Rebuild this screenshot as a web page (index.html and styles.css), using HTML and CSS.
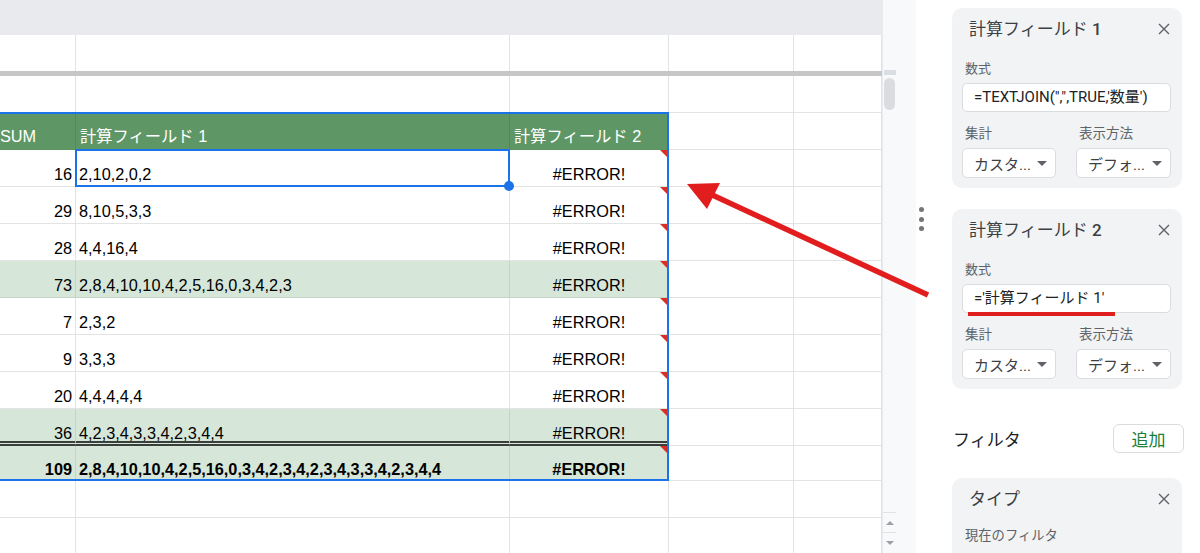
FILE: index.html
```html
<!DOCTYPE html>
<html lang="ja">
<head>
<meta charset="utf-8">
<title>Pivot</title>
<link rel="stylesheet" href="styles.css">
</head>
<body>
<div class="app">
  <div class="sheet">
    <div class="band"></div>
    <div class="row r-top"><div class="c a"></div><div class="c b"></div><div class="c cc"></div><div class="c d"></div><div class="c e"></div></div>
    <div class="freeze"></div>
    <div class="row"><div class="c a"></div><div class="c b"></div><div class="c cc"></div><div class="c d"></div><div class="c e"></div></div>
    <div class="row hdr"><div class="c a">SUM</div><div class="c b">計算フィールド 1</div><div class="c cc">計算フィールド 2</div><div class="c d"></div><div class="c e"></div></div>
    <div class="row"><div class="c a">16</div><div class="c b">2,10,2,0,2</div><div class="c cc err">#ERROR!</div><div class="c d"></div><div class="c e"></div></div>
    <div class="row"><div class="c a">29</div><div class="c b">8,10,5,3,3</div><div class="c cc err">#ERROR!</div><div class="c d"></div><div class="c e"></div></div>
    <div class="row"><div class="c a">28</div><div class="c b">4,4,16,4</div><div class="c cc err">#ERROR!</div><div class="c d"></div><div class="c e"></div></div>
    <div class="row g"><div class="c a">73</div><div class="c b">2,8,4,10,10,4,2,5,16,0,3,4,2,3</div><div class="c cc err">#ERROR!</div><div class="c d"></div><div class="c e"></div></div>
    <div class="row"><div class="c a">7</div><div class="c b">2,3,2</div><div class="c cc err">#ERROR!</div><div class="c d"></div><div class="c e"></div></div>
    <div class="row"><div class="c a">9</div><div class="c b">3,3,3</div><div class="c cc err">#ERROR!</div><div class="c d"></div><div class="c e"></div></div>
    <div class="row"><div class="c a">20</div><div class="c b">4,4,4,4,4</div><div class="c cc err">#ERROR!</div><div class="c d"></div><div class="c e"></div></div>
    <div class="row g dbl"><div class="c a">36</div><div class="c b">4,2,3,4,3,3,4,2,3,4,4</div><div class="c cc err">#ERROR!</div><div class="c d"></div><div class="c e"></div></div>
    <div class="row g total"><div class="c a">109</div><div class="c b">2,8,4,10,10,4,2,5,16,0,3,4,2,3,4,2,3,4,3,3,4,2,3,4,4</div><div class="c cc err">#ERROR!</div><div class="c d"></div><div class="c e"></div></div>
    <div class="row"><div class="c a"></div><div class="c b"></div><div class="c cc"></div><div class="c d"></div><div class="c e"></div></div>
    <div class="row"><div class="c a"></div><div class="c b"></div><div class="c cc"></div><div class="c d"></div><div class="c e"></div></div>
    <div class="table-outline"></div>
    <div class="sel"><span class="handle"></span></div>
  </div>

  <div class="vscroll">
    <div class="vs-freeze"></div>
    <div class="vs-thumb"></div>
    <div class="vs-space"></div>
    <div class="vs-arrows">
      <div class="vs-btn"><span class="tri-up"></span></div>
      <div class="vs-btn"><span class="tri-down"></span></div>
    </div>
  </div>
  <div class="gutter"></div>

  <div class="panel">
    <div class="drag-col">
      <div class="dots"><span></span><span></span><span></span></div>
    </div>
    <div class="cards">
      <div class="card">
        <div class="card-head">
          <span class="card-title">計算フィールド <b>1</b></span>
          <svg class="close" width="12" height="12" viewBox="0 0 12 12"><path d="M1 1L11 11M11 1L1 11" stroke="#5f6368" stroke-width="1.4" fill="none"/></svg>
        </div>
        <div class="lbl">数式</div>
        <div class="field">=TEXTJOIN(",",TRUE,'数量')</div>
        <div class="lbl-row"><span>集計</span><span>表示方法</span></div>
        <div class="dd-row">
          <div class="dd"><span>カスタ...</span><span class="caret"></span></div>
          <div class="dd"><span>デフォ...</span><span class="caret"></span></div>
        </div>
      </div>

      <div class="card card2">
        <div class="card-head">
          <span class="card-title">計算フィールド <b>2</b></span>
          <svg class="close" width="12" height="12" viewBox="0 0 12 12"><path d="M1 1L11 11M11 1L1 11" stroke="#5f6368" stroke-width="1.4" fill="none"/></svg>
        </div>
        <div class="lbl">数式</div>
        <div class="field">='計算フィールド 1'<span class="underline"></span></div>
        <div class="lbl-row"><span>集計</span><span>表示方法</span></div>
        <div class="dd-row">
          <div class="dd"><span>カスタ...</span><span class="caret"></span></div>
          <div class="dd"><span>デフォ...</span><span class="caret"></span></div>
        </div>
      </div>

      <div class="filter-row">
        <span class="filter-title">フィルタ</span>
        <span class="add-btn">追加</span>
      </div>

      <div class="card card3">
        <div class="card-head">
          <span class="card-title">タイプ</span>
          <svg class="close" width="12" height="12" viewBox="0 0 12 12"><path d="M1 1L11 11M11 1L1 11" stroke="#5f6368" stroke-width="1.4" fill="none"/></svg>
        </div>
        <div class="lbl lbl3">現在のフィルタ</div>
        <div class="field field3"></div>
      </div>
    </div>
  </div>

  <svg class="arrow" width="1200" height="553" viewBox="0 0 1200 553">
    <line x1="928" y1="295" x2="708" y2="193" stroke="#e21d1d" stroke-width="5.5" stroke-linecap="butt"/>
    <polygon points="687,184 720,183 707,209" fill="#e21d1d"/>
  </svg>
</div>
</body>
</html>
```

FILE: styles.css
```css
html, body {
  margin: 0;
  padding: 0;
}
body {
  width: 1200px;
  height: 553px;
  overflow: hidden;
  background: #fff;
  font-family: "Liberation Sans", "Noto Sans CJK JP", sans-serif;
}
.app {
  position: relative;
  display: flex;
  width: 1200px;
  height: 553px;
  overflow: hidden;
}

/* ---------- sheet ---------- */
.sheet {
  position: relative;
  width: 882px;
  flex: none;
  overflow: hidden;
  font-size: 16.3px;
  color: #000;
}
.band {
  height: 35px;
  background: #e8eaed;
}
.row {
  display: flex;
  height: 37px;
}
.r-top { height: 36px; }
.freeze {
  height: 5px;
  background: #c6c6c6;
}
.c {
  box-sizing: border-box;
  height: 100%;
  border-right: 1px solid #e2e3e3;
  border-bottom: 1px solid #e2e3e3;
  padding-top: 14px;
  line-height: 20px;
  white-space: nowrap;
  overflow: hidden;
}
.r-top .c { border-bottom: none; }
.a { width: 76px; text-align: right; padding-right: 3px; }
.b { width: 434px; padding-left: 3px; }
.cc { width: 159px; text-align: center; position: relative; }
.d { width: 125px; }
.e { width: 88px; }

.hdr .a, .hdr .b, .hdr .cc {
  background: #5e9765;
  color: #fff;
  padding-top: 13px;
  text-align: left;
  border-right-color: rgba(0, 0, 0, 0.1);
  border-bottom-color: #5e9765;
}
.hdr .a { padding-left: 0; padding-right: 0; }
.hdr .b, .hdr .cc { padding-left: 4px; }

.g .a, .g .b, .g .cc {
  background: #d6e6d8;
  border-right-color: #c3d4c6;
  border-bottom-color: #c3d4c6;
}
.dbl .a, .dbl .b, .dbl .cc {
  border-bottom: 5px double #3a3f3b;
}
.total { height: 35px; }
.total .c { font-weight: bold; padding-top: 13px; }

.err::after {
  content: "";
  position: absolute;
  top: 0;
  right: 1px;
  border-top: 7px solid #d93025;
  border-left: 7px solid transparent;
}

.table-outline {
  position: absolute;
  left: -2px;
  top: 112px;
  width: 671px;
  height: 369px;
  box-sizing: border-box;
  border: 2px solid #1a73e8;
  pointer-events: none;
}
.sel {
  position: absolute;
  left: 75px;
  top: 149px;
  width: 435px;
  height: 38px;
  box-sizing: border-box;
  border: 2px solid #1a73e8;
}
.handle {
  position: absolute;
  right: -6px;
  bottom: -6px;
  width: 10px;
  height: 10px;
  border-radius: 50%;
  background: #1a73e8;
}

/* ---------- scrollbar ---------- */
.vscroll {
  width: 14px;
  flex: none;
  display: flex;
  flex-direction: column;
  background: #f8f9fa;
  box-sizing: border-box;
  border-left: 1px solid #e8eaed;
}
.vs-freeze {
  margin-top: 70px;
  margin-left: 1px;
  height: 5px;
  background: #d9dee4;
}
.vs-thumb {
  margin-top: 3px;
  margin-left: 1px;
  width: 11px;
  height: 32px;
  border-radius: 6px;
  background: #dadce0;
}
.vs-space { flex: 1; }
.vs-arrows {
  height: 40px;
  border-top: 1px solid #e3e3e3;
}
.vs-btn {
  height: 19px;
  display: flex;
  align-items: center;
  justify-content: center;
}
.vs-btn + .vs-btn { border-top: 1px solid #e3e3e3; }
.tri-up {
  width: 0; height: 0;
  border-left: 4px solid transparent;
  border-right: 4px solid transparent;
  border-bottom: 4px solid #9aa0a6;
}
.tri-down {
  width: 0; height: 0;
  border-left: 4px solid transparent;
  border-right: 4px solid transparent;
  border-top: 4px solid #9aa0a6;
}
.gutter {
  width: 20px;
  flex: none;
  background: #f8f9fa;
}

/* ---------- panel ---------- */
.panel {
  flex: 1;
  display: flex;
  background: #fff;
  font-family: Roboto, "Noto Sans CJK JP", sans-serif;
}
.drag-col {
  width: 36px;
  flex: none;
}
.dots {
  margin-top: 207px;
  margin-left: 3px;
  display: flex;
  flex-direction: column;
  gap: 4.5px;
}
.dots span {
  width: 5px;
  height: 5px;
  border-radius: 50%;
  background: #757575;
}
.cards {
  width: 232px;
  padding-top: 8px;
}
.card {
  width: 230px;
  box-sizing: border-box;
  background: #f1f3f4;
  border-radius: 10px;
  padding: 9px 11px 10px 10px;
}
.card2 { margin-top: 21px; }
.card3 { margin-top: 25px; padding-bottom: 40px; }
.card-head {
  height: 24px;
  display: flex;
  align-items: center;
  justify-content: space-between;
  padding: 0 1px 0 7px;
}
.card-title {
  font-size: 17px;
  line-height: 24px;
  color: #3c4043;
}
.card-title b { font-weight: 500; }
.close { display: block; }
.lbl {
  margin-top: 19px;
  height: 18px;
  line-height: 18px;
  font-size: 13px;
  color: #5f6368;
  padding-left: 3px;
}
.lbl3 { margin-top: 16px; font-size: 13.3px; }
.field {
  position: relative;
  margin-top: 5px;
  height: 29px;
  box-sizing: border-box;
  background: #fff;
  border: 1px solid #dadce0;
  border-radius: 5px;
  padding-left: 11px;
  font-size: 15px;
  line-height: 27px;
  color: #202124;
  white-space: nowrap;
}
.field3 { margin-top: 8px; height: 32px; }
.underline {
  position: absolute;
  left: 5px;
  top: 27px;
  width: 147px;
  height: 4px;
  background: #e0201f;
}
.lbl-row {
  margin-top: 12px;
  height: 18px;
  display: grid;
  grid-template-columns: 94px 95px;
  column-gap: 20px;
  font-size: 13.5px;
  line-height: 18px;
  color: #5f6368;
}
.lbl-row span { padding-left: 3px; }
.dd-row {
  margin-top: 6px;
  display: grid;
  grid-template-columns: 94px 95px;
  column-gap: 20px;
}
.dd {
  height: 30px;
  box-sizing: border-box;
  background: #fff;
  border: 1px solid #dadce0;
  border-radius: 5px;
  display: flex;
  align-items: center;
  justify-content: space-between;
  padding: 0 8px 0 11px;
  font-size: 15px;
  color: #3c4043;
  white-space: nowrap;
}
.caret {
  width: 0; height: 0;
  border-left: 5px solid transparent;
  border-right: 5px solid transparent;
  border-top: 5px solid #5f6368;
}
.filter-row {
  margin-top: 35px;
  height: 29px;
  display: flex;
  align-items: center;
  justify-content: space-between;
  padding-left: 1px;
}
.filter-title {
  font-size: 17px;
  color: #202124;
}
.add-btn {
  width: 71px;
  height: 29px;
  box-sizing: border-box;
  border: 1px solid #dadce0;
  border-radius: 6px;
  display: flex;
  align-items: center;
  justify-content: center;
  color: #188038;
  font-size: 17px;
  background: #fff;
}

/* ---------- annotation ---------- */
.arrow {
  position: absolute;
  left: 0;
  top: 0;
  pointer-events: none;
}
```
